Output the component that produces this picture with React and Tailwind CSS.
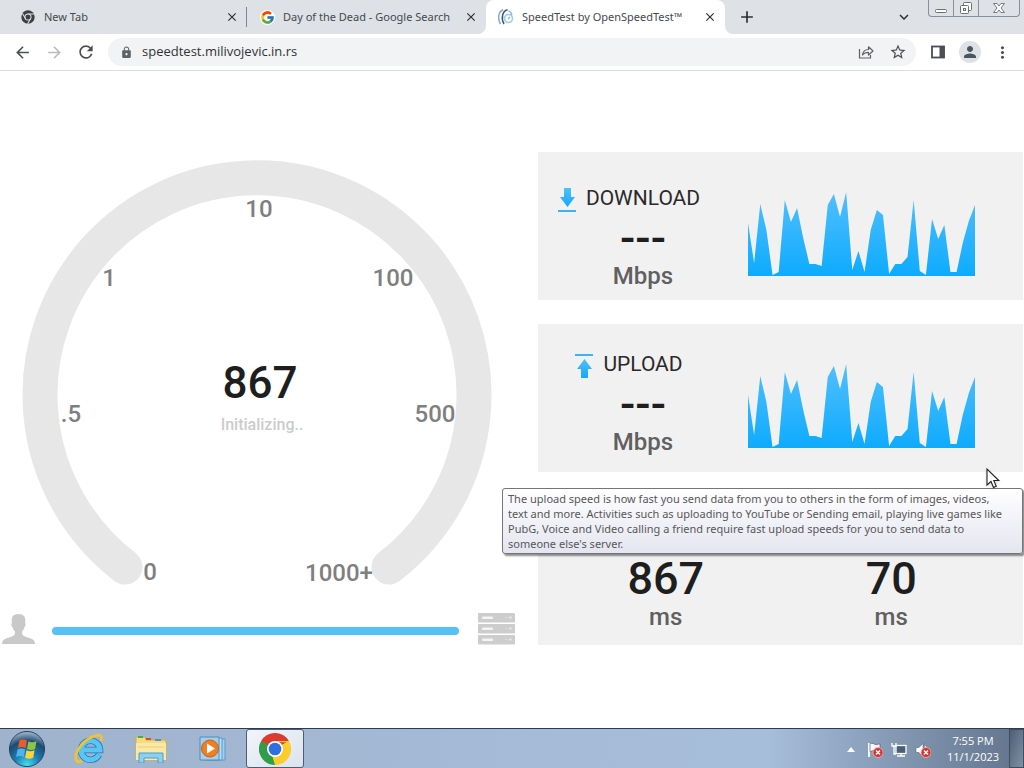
import React from 'react';
import { FcGoogle } from 'react-icons/fc';
import {
  MdAdd,
  MdArrowBack,
  MdArrowForward,
  MdClose,
  MdExpandMore,
  MdLock,
  MdMoreVert,
  MdPerson,
  MdRefresh,
  MdStarBorder,
} from 'react-icons/md';

const SAMPLES = [
  53, 13, 72, 46, 1, 4, 76, 54, 68, 38, 12, 12, 10, 71, 82, 59, 84, 6, 25, 4,
  46, 66, 61, 2, 12, 12, 19, 76, 5, 1, 57, 37, 51, 4, 4, 33, 55, 71,
];

const GAUGE_LABELS = [
  { text: '0', x: 150, y: 428 },
  { text: '.5', x: 71, y: 270 },
  { text: '1', x: 109, y: 134 },
  { text: '10', x: 259, y: 65 },
  { text: '100', x: 393, y: 134 },
  { text: '500', x: 435, y: 270 },
  { text: '1000+', x: 339, y: 429 },
];

/* Icons */

const ChromeMono = () => (
  <svg viewBox="0 0 48 48" className="h-3.5 w-3.5">
    <circle cx="24" cy="24" r="23" fill="#3c4043" />
    <circle cx="24" cy="24" r="10.5" fill="#3c4043" stroke="#dee1e6" strokeWidth="3.5" />
    <path d="M24 13.500h21M15 29.500 4.500 11.500M33 29.500 22.500 47.500" stroke="#dee1e6" strokeWidth="3.5" />
  </svg>
);

const ChromeColor = () => (
  <svg viewBox="0 0 48 48" className="h-8 w-8">
    <path d="M24 24 3.200 12A24 24 0 0 1 44.800 12Z" fill="#dd3b2f" />
    <path d="M24 24 3.200 12A24 24 0 0 0 24 48Z" fill="#2f9e4b" />
    <path d="M24 24 24 48A24 24 0 0 0 44.800 12Z" fill="#fccb2c" />
    <path d="M13.600 30 3.200 12 24 12Z" fill="#dd3b2f" />
    <path d="M3.200 12 13.600 30 24 24ZM13.600 30 24 36 24 48Z" fill="#2f9e4b" />
    <path d="M34.400 30 24 48 20 35Z" fill="#fccb2c" />
    <path d="M24 12H44.800L46 14H30Z" fill="#fccb2c" />
    <circle cx="24" cy="24" r="12" fill="#fff" />
    <circle cx="24" cy="24" r="9.500" fill="#2f6fe0" />
  </svg>
);

const SpeedLogo = () => (
  <svg viewBox="0 0 16 16" className="h-4 w-4 shrink-0" fill="none">
    <path d="M5 .8C0 3-.5 10 2.500 15" stroke="#7fabd0" strokeWidth="1.500" />
    <path d="M9.500.8C4 2 3 10 6 15" stroke="#3f5468" strokeWidth="1.500" />
    <circle cx="10.500" cy="9.500" r="4" stroke="#9acbf1" strokeWidth="1.600" />
    <path d="M10 10 12 8M9 1.500C12 2 13.500 4 14 6" stroke="#7db8e8" strokeWidth="1.200" />
  </svg>
);

const ShareIcon = () => (
  <svg viewBox="0 0 16 16" className="h-4 w-4" fill="none" stroke="#5f6368" strokeWidth="1.200">
    <path d="M1.500 5v9h11v-3" />
    <path d="M4.500 11c.4-3.500 2.500-5.500 6-5.500V2.800L15 7l-4.500 4V8.300c-2.800 0-4.500.7-6 2.700Z" strokeLinejoin="round" />
  </svg>
);

const SidePanelIcon = () => (
  <svg viewBox="0 0 16 16" className="h-4 w-4">
    <rect x="2" y="2.500" width="12" height="11" fill="none" stroke="#4b4f54" strokeWidth="1.800" />
    <rect x="9.500" y="2" width="5" height="12" fill="#4b4f54" />
  </svg>
);

const DownloadIcon = () => (
  <svg viewBox="0 0 18 24" className="mt-1 h-6 w-[18px]">
    <defs>
      <linearGradient id="downArrow" x1="0" y1="0" x2="0" y2="1">
        <stop offset="0" stopColor="#4fc0f8" />
        <stop offset="1" stopColor="#17a7fb" />
      </linearGradient>
    </defs>
    <path d="M6 0h7v9h4l-7.500 10L2 9h4Z" fill="url(#downArrow)" />
    <path d="M0 23h18" stroke="#3fb2f0" strokeWidth="2" />
  </svg>
);

const UploadIcon = () => (
  <svg viewBox="0 0 18 24" className="mt-1 h-6 w-[18px]">
    <defs>
      <linearGradient id="upArrow" x1="0" y1="0" x2="0" y2="1">
        <stop offset="0" stopColor="#4fc0f8" />
        <stop offset="1" stopColor="#17a7fb" />
      </linearGradient>
    </defs>
    <path d="M0 1h18" stroke="#3fb2f0" strokeWidth="2" />
    <path d="M6 24h7v-9h4L9.500 5 2 15h4Z" fill="url(#upArrow)" />
  </svg>
);

const ClientIcon = () => (
  <svg viewBox="0 0 33 30" className="h-[30px] w-[33px] shrink-0">
    <path
      d="M10 4C11 1 13 0 16.500 0S22 1 23 4c.5 2 .3 4 0 5 1 0 .8 3-.8 4.500-.4 2-1.200 3-2.200 4 0 3 .5 4 3 5 5 2 10 2 10 7.500H0C0 24.500 5 24.500 10 22.500c2.500-1 3-2 3-5-1-1-1.800-2-2.200-4C9.200 12 9 9 10 9c-.3-1-.5-3 0-5Z"
      fill="#c9c9c9"
    />
  </svg>
);

const ServerIcon = () => (
  <svg viewBox="0 0 37 32" className="h-8 w-[37px] shrink-0">
    {[0, 11, 22].map((y) => (
      <g key={y}>
        <rect y={y} width="37" height="9.500" rx="1" fill="#cdcdcd" />
        <rect x="4" y={y + 3.5} width="11" height="2.500" rx="1" fill="#f4f4f4" />
        <rect x="27" y={y + 4} width="3" height="1" fill="#dcdcdc" />
        <circle cx="32.500" cy={y + 4.5} r="1.300" fill="#e6e6e6" />
      </g>
    ))}
  </svg>
);

const StartOrb = () => (
  <svg viewBox="0 0 40 40" className="h-[38px] w-[38px]">
    <defs>
      <radialGradient id="orb" cx="0.5" cy="0.95" r="0.9">
        <stop offset="0" stopColor="#3fe0f5" />
        <stop offset="0.4" stopColor="#1c7db0" />
        <stop offset="0.75" stopColor="#1d4a72" />
        <stop offset="1" stopColor="#8fa9bd" />
      </radialGradient>
    </defs>
    <circle cx="20" cy="20" r="18.500" fill="url(#orb)" stroke="#24425f" />
    <path d="M12 11c3-1.500 5-1.500 8 0l-1.500 8c-3-1.300-5-1.300-8 0Z" fill="#ef5a28" />
    <path d="M21.500 11.800c3 1.400 5 1.400 8.500 0L28.500 20c-3 1.300-5 1.300-8.500 0Z" fill="#8cc63e" />
    <path d="M10 20.500c3-1.400 5-1.400 8 0l-1.500 8c-3-1.400-5-1.400-8 0Z" fill="#4fb4ea" />
    <path d="M19.500 21.300c3 1.400 5 1.400 8.500 0l-1.500 8c-3 1.400-5 1.400-8.500 0Z" fill="#fdd23c" />
  </svg>
);

const ExplorerE = () => (
  <svg viewBox="0 0 32 32" className="h-8 w-8" fill="none">
    <path d="M26 21.500A9.500 9.500 0 1 1 27 17H10" stroke="#1b78bd" strokeWidth="6.500" />
    <path d="M26 21.500A9.500 9.500 0 1 1 27 17H10" stroke="#5cc4f2" strokeWidth="5" />
    <path d="M28 8C30 2 26 0 18 4.500 9 9 1 20 3 27c1 2.500 4 2 6 .5" stroke="#f2c32e" strokeWidth="2.800" />
  </svg>
);

const FolderIcon = () => (
  <svg viewBox="0 0 32 28" className="h-7 w-8">
    <path d="M1 2h9l1 3h20v20H1Z" fill="#f5dc81" stroke="#d2ae45" />
    <path d="M3 1h5v2H3Z" fill="#49a850" />
    <path d="M11 3h5v2h-5Z" fill="#d1502f" />
    <path d="M20 4h6v2h-6Z" fill="#4d93c9" />
    <path d="M1 8h30v17H1Z" fill="#fae9a5" />
    <path d="M3 12h26" stroke="#e8cd74" />
    <path d="M4 28V18h24v10h-5v-5H9v5Z" fill="#8fd0ef" stroke="#4e9ccb" />
  </svg>
);

const MediaPlayerIcon = () => (
  <svg viewBox="0 0 28 26" className="h-[26px] w-7">
    <path d="M8 3h18v21H8Z" fill="#9fd0ee" stroke="#5b9cc8" />
    <path d="M5 2h18v22H5Z" fill="#b6def4" stroke="#5b9cc8" />
    <path d="M1 1h19v23H1Z" fill="#a6cdea" stroke="#4d8ec0" />
    <circle cx="11" cy="12.500" r="8.500" fill="#ee7f22" stroke="#c9621a" />
    <path d="M8 7.500v10l8-5Z" fill="#fff" />
  </svg>
);

const TrayError = () => (
  <g>
    <circle cx="11" cy="10.500" r="5" fill="#d8352d" stroke="#f3c0bc" strokeWidth="0.700" />
    <path d="m9 8.500 4 4m0-4-4 4" stroke="#fff" strokeWidth="1.500" />
  </g>
);

const FlagIcon = () => (
  <svg viewBox="0 0 16 16" className="h-4 w-4">
    <path d="M2 1v14" stroke="#fff" strokeWidth="1.800" />
    <path d="M3 1.500c3-1 4 1 6 1s3-.5 4-.5V9c-3 1-4-.5-6-.5S4 9.500 3 9.500Z" fill="#f4f6f9" stroke="#46566a" strokeWidth="0.600" />
    <TrayError />
  </svg>
);

const NetworkIcon = () => (
  <svg viewBox="0 0 16 16" className="h-4 w-4">
    <rect x="5" y="3.500" width="10" height="8" fill="#4b6077" stroke="#fff" strokeWidth="1.300" />
    <path d="M6 14h8M10 12v2" stroke="#fff" strokeWidth="1.300" />
    <path d="M1 1v3h4V1M3 4v8h2" fill="none" stroke="#fff" strokeWidth="1.300" />
  </svg>
);

const SpeakerIcon = () => (
  <svg viewBox="0 0 16 16" className="h-4 w-4">
    <path d="M1 5.500h3L8 1.500v13L4 10.500H1Z" fill="#fff" stroke="#46566a" strokeWidth="0.500" />
    <path d="M10 4c1.500 1.500 1.500 3 1.500 4" fill="none" stroke="#fff" />
    <TrayError />
  </svg>
);

/* Browser */

const TabFlare = ({ className }) => (
  <svg viewBox="0 0 8 8" className={className}>
    <path d="M8 0v8H0a8 8 0 0 0 8-8Z" fill="#fff" />
  </svg>
);

const Tab = ({ icon, title, active, divider }) => (
  <div
    className={`relative flex w-[239px] min-w-0 items-center pl-[13px] pr-2 ${
      active ? 'rounded-t-lg bg-white' : ''
    }`}
  >
    {active && (
      <>
        <TabFlare className="absolute -left-2 bottom-0 h-2 w-2" />
        <TabFlare className="absolute -right-2 bottom-0 h-2 w-2 -scale-x-100" />
      </>
    )}
    <span className="flex w-3.5 shrink-0 items-center justify-center">{icon}</span>
    <button className="ml-[9px] min-w-0 flex-1 overflow-hidden whitespace-nowrap text-left">{title}</button>
    <button aria-label={`Close ${title}`} className="flex w-3.5 shrink-0 justify-center text-[#2c2f33]">
      <MdClose size={14} />
    </button>
    {divider && <span className="absolute right-0 h-5 w-px bg-[#80868b]" />}
  </div>
);

const WindowControls = () => (
  <div className="mr-1 flex h-[17px] shrink-0 divide-x divide-[#8a8f96] rounded-b border border-t-0 border-[#8a8f96]">
    <button aria-label="Minimize" className="flex w-[25px] items-center justify-center">
      <svg viewBox="0 0 14 12" className="h-3 w-3.5" fill="#fff" stroke="#6b7076">
        <rect x="1.500" y="7.500" width="11" height="3" rx="1" />
      </svg>
    </button>
    <button aria-label="Restore" className="flex w-[25px] items-center justify-center">
      <svg viewBox="0 0 14 14" className="h-3.5 w-3.5" fill="#fff" stroke="#6b7076">
        <rect x="4.500" y="1.500" width="8" height="8" rx="1" />
        <rect x="1.500" y="4.500" width="8" height="8" rx="1" />
        <rect x="4.500" y="7.500" width="2" height="2" />
      </svg>
    </button>
    <button aria-label="Close window" className="flex w-10 items-center justify-center">
      <svg viewBox="0 0 14 12" className="h-3 w-3.5" fill="#fff" stroke="#6b7076" strokeWidth="0.900">
        <path d="M1.500 1.500h3.500L7 4l2-2.500h3.500L9 6l3.500 4.500H9L7 8l-2 2.500H1.500L5 6Z" />
      </svg>
    </button>
  </div>
);

const TabStrip = () => (
  <div
    className="flex h-[34px] bg-[#dee1e6] pl-2 text-[11px] text-[#45494d]"
    style={{ fontFamily: '"Noto Sans", sans-serif' }}
  >
    <Tab icon={<ChromeMono />} title="New Tab" divider />
    <Tab icon={<FcGoogle size={15} className="shrink-0 rounded-full bg-white" />} title="Day of the Dead - Google Search" />
    <Tab icon={<SpeedLogo />} title="SpeedTest by OpenSpeedTest™" active />
    <button aria-label="New tab" className="ml-3 flex w-5 items-center justify-center text-[#2c2f33]">
      <MdAdd size={20} />
    </button>
    <div className="flex-1" />
    <button aria-label="Search tabs" className="mr-3.5 flex w-5 items-center justify-center text-[#2c2f33]">
      <MdExpandMore size={18} />
    </button>
    <WindowControls />
  </div>
);

const ToolButton = ({ label, children }) => (
  <button aria-label={label} className="flex h-7 w-8 shrink-0 items-center justify-center">
    {children}
  </button>
);

const Toolbar = () => (
  <div className="flex h-[37px] items-center border-b border-[#dcdee1] bg-white px-1.5 text-[#4b4f54]">
    <ToolButton label="Back"><MdArrowBack size={19} /></ToolButton>
    <ToolButton label="Forward"><MdArrowForward size={19} className="text-[#b9bbbe]" /></ToolButton>
    <ToolButton label="Reload"><MdRefresh size={20} /></ToolButton>
    <div className="mx-1.5 flex h-7 min-w-0 flex-1 items-center rounded-full bg-[#f1f3f4] pl-3 pr-0.5">
      <MdLock size={13} className="shrink-0 text-[#5f6368]" />
      <input
        aria-label="Address"
        defaultValue="speedtest.milivojevic.in.rs"
        className="ml-[9px] min-w-0 flex-1 bg-transparent text-[13px] text-[#303336] outline-none"
      />
      <ToolButton label="Share"><ShareIcon /></ToolButton>
      <ToolButton label="Bookmark"><MdStarBorder size={18} /></ToolButton>
    </div>
    <ToolButton label="Side panel"><SidePanelIcon /></ToolButton>
    <ToolButton label="Profile">
      <span className="flex h-[22px] w-[22px] items-center justify-center rounded-full bg-[#dee1e6]">
        <MdPerson size={18} className="text-[#4a5560]" />
      </span>
    </ToolButton>
    <ToolButton label="Menu"><MdMoreVert size={19} /></ToolButton>
  </div>
);

/* Speed test */

const Gauge = () => (
  <svg viewBox="0 0 538 452" className="w-full" textAnchor="middle">
    <path
      d="M125 415A217 217 0 1 1 389 415"
      fill="none"
      stroke="#e7e7e7"
      strokeWidth="35"
      strokeLinecap="round"
    />
    {GAUGE_LABELS.map(({ text, x, y }) => (
      <text key={text} x={x} y={y} className="fill-[#7f7f7f] text-[24px] font-medium">
        {text}
      </text>
    ))}
    <text x="260" y="246" className="fill-[#1e1e1e] text-[44px] font-medium">867</text>
    <text x="262" y="278" className="fill-[#cccccc] text-base font-medium">Initializing..</text>
  </svg>
);

const SpeedChart = ({ id }) => {
  const step = 227 / (SAMPLES.length - 1);
  const points = SAMPLES.map((v, i) => `${i * step},${84 - v}`).join(' ');
  return (
    <svg viewBox="0 0 227 84" preserveAspectRatio="none" className="h-[84px] w-full">
      <defs>
        <linearGradient id={id} x1="0" y1="0" x2="0" y2="1">
          <stop offset="0" stopColor="#52bffc" />
          <stop offset="1" stopColor="#0dabff" />
        </linearGradient>
      </defs>
      <polygon points={`0,84 ${points} 227,84`} fill={`url(#${id})`} />
    </svg>
  );
};

const Value = ({ children }) => (
  <div className="text-[45px] font-medium leading-[48px] text-[#1e1e1e]">{children}</div>
);

const Unit = ({ children }) => (
  <div className="text-2xl font-medium leading-7 text-[#606060]">{children}</div>
);

const SpeedCard = ({ icon, label, chartId, className }) => (
  <section className={`flex h-[148px] bg-[#f1f1f1] ${className}`}>
    <div className="flex w-[210px] shrink-0 flex-col items-center">
      <h2 className="mb-1 flex h-6 items-center gap-2.5 pr-7 text-[21px] leading-6 text-[#2a2a2a]">
        {icon}
        {label}
      </h2>
      <Value>---</Value>
      <Unit>Mbps</Unit>
    </div>
    <div className="flex flex-1 items-end pb-6 pr-12">
      <SpeedChart id={chartId} />
    </div>
  </section>
);

const UploadTooltip = () => (
  <div
    role="tooltip"
    className="absolute -left-9 right-0 top-[164px] rounded-[3px] border border-[#767676] bg-linear-to-b from-white to-[#e4e5f0] py-0.5 pl-[5px] pr-4 text-[11px] leading-[15px] text-[#575757] shadow-[2px_2px_2px_rgba(0,0,0,0.45)]"
    style={{ fontFamily: '"Noto Sans", sans-serif' }}
  >
    The upload speed is how fast you send data from you to others in the form of images, videos,
    text and more. Activities such as uploading to YouTube or Sending email, playing live games
    like PubG, Voice and Video calling a friend require fast upload speeds for you to send data to
    someone else's server.
  </div>
);

const Cursor = () => (
  <svg viewBox="0 0 13 20" className="absolute right-6 top-36 h-5 w-[13px] overflow-visible drop-shadow">
    <path d="M1 1v16l4-3.500 2.500 6 2.800-1.200L7.800 12.500h5Z" fill="#fff" stroke="#222" strokeWidth="1.100" />
  </svg>
);

const SpeedTest = () => (
  <main
    className="grid flex-1 grid-cols-[538fr_485fr] items-start bg-white pb-20 pr-px pt-[81px]"
    style={{ fontFamily: 'Roboto, sans-serif' }}
  >
    <div>
      <Gauge />
      <div className="mt-[9px] flex items-center pl-0.5 pr-[23px]">
        <ClientIcon />
        <div className="ml-[17px] mr-[19px] mt-1 h-2 flex-1 rounded-full bg-[#56c1f4]" />
        <ServerIcon />
      </div>
    </div>
    <div className="flex flex-col gap-6">
      <SpeedCard icon={<DownloadIcon />} label="DOWNLOAD" chartId="downloadFill" className="pt-[34px]" />
      <div className="relative">
        <SpeedCard icon={<UploadIcon />} label="UPLOAD" chartId="uploadFill" className="pt-7" />
        <UploadTooltip />
        <Cursor />
      </div>
      <section className="grid h-[149px] grid-cols-2 bg-[#f1f1f1] pl-[15px] pr-[19px] pt-[59px] text-center">
        <div>
          <Value>867</Value>
          <Unit>ms</Unit>
        </div>
        <div>
          <Value>70</Value>
          <Unit>ms</Unit>
        </div>
      </section>
    </div>
  </main>
);

/* Taskbar */

const TaskButton = ({ label, active, children }) => (
  <button
    aria-label={label}
    className={`flex w-[58px] items-center justify-center ${
      active ? 'rounded-[3px] border border-[#4d5d75] bg-linear-to-br from-[#f2f5f9] to-[#dbe3ee]' : ''
    }`}
  >
    {children}
  </button>
);

const Taskbar = () => (
  <footer className="flex h-10 border-t border-[#2c3b52] bg-linear-to-r from-[#a0b3cd] via-[#a7bedb] via-75% to-[#62748c]">
    <button aria-label="Start" className="flex w-[54px] items-center justify-center">
      <StartOrb />
    </button>
    <div className="ml-1.5 flex gap-1">
      <TaskButton label="Internet Explorer"><ExplorerE /></TaskButton>
      <TaskButton label="Windows Explorer"><FolderIcon /></TaskButton>
      <TaskButton label="Media Player"><MediaPlayerIcon /></TaskButton>
      <TaskButton label="Google Chrome" active><ChromeColor /></TaskButton>
    </div>
    <div className="flex-1" />
    <div className="mr-1.5 flex items-center gap-2 pt-0.5">
      <button aria-label="Show hidden icons" className="flex h-4 w-4 items-center justify-center">
        <svg viewBox="0 0 8 5" className="h-[5px] w-2">
          <path d="M4 0 8 5H0Z" fill="#fff" />
        </svg>
      </button>
      <FlagIcon />
      <NetworkIcon />
      <SpeakerIcon />
    </div>
    <div className="w-[72px] pt-1 text-center text-[11px] leading-4 text-white">
      <div>7:55 PM</div>
      <div>11/1/2023</div>
    </div>
    <button
      aria-label="Show desktop"
      className="w-[15px] border border-[#3e4d61] bg-linear-to-br from-[#4f6076] to-[#8090a5]"
    />
  </footer>
);

const App = () => (
  <div className="flex min-h-screen flex-col" style={{ fontFamily: '"Open Sans", sans-serif' }}>
    <TabStrip />
    <Toolbar />
    <SpeedTest />
    <Taskbar />
  </div>
);

export default App;
